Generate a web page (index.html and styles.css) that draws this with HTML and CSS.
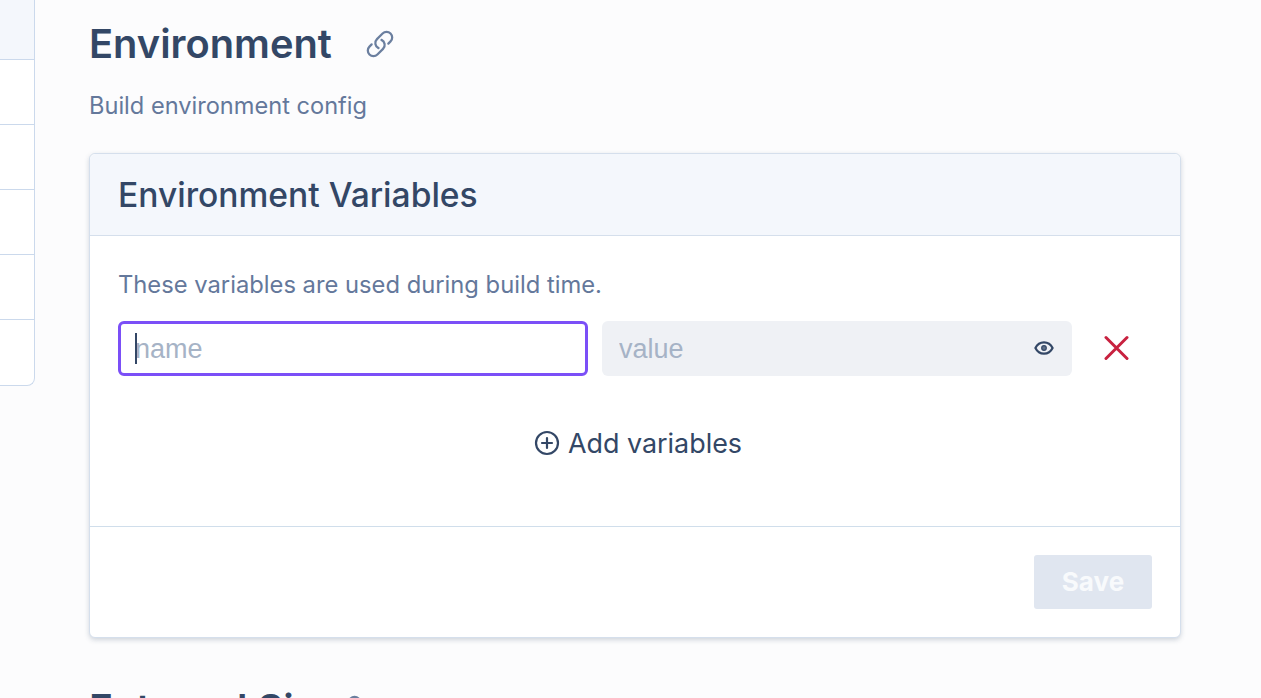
FILE: index.html
```html
<!DOCTYPE html>
<html lang="en">
<head>
<meta charset="utf-8">
<title>Environment</title>
<link rel="stylesheet" href="styles.css">
</head>
<body>
<div class="page">
  <aside class="sidenav">
    <div class="nav-row nav-row-active"></div>
    <div class="nav-row"></div>
    <div class="nav-row"></div>
    <div class="nav-row"></div>
    <div class="nav-row"></div>
    <div class="nav-row nav-row-last"></div>
  </aside>
  <main class="main">
    <div class="section-head">
      <h1 class="section-title">Environment</h1>
      <svg class="link-icon" viewBox="0 0 24 24" fill="none" stroke="currentColor" stroke-width="1.8" stroke-linecap="round" stroke-linejoin="round"><path d="M13.19 8.688a4.5 4.5 0 0 1 1.242 7.244l-4.5 4.5a4.5 4.5 0 0 1-6.364-6.364l1.757-1.757m13.35-.622 1.757-1.757a4.5 4.5 0 0 0-6.364-6.364l-4.5 4.5a4.5 4.5 0 0 0 1.242 7.244"/></svg>
    </div>
    <p class="section-sub">Build environment config</p>
    <section class="card">
      <header class="card-head">
        <h2 class="card-title">Environment Variables</h2>
      </header>
      <div class="card-body">
        <p class="hint">These variables are used during build time.</p>
        <div class="var-row">
          <div class="field field-focus">
            <input class="field-input" type="text" placeholder="name">
            <span class="caret"></span>
          </div>
          <div class="field field-muted">
            <input class="field-input" type="text" placeholder="value">
            <svg class="eye-icon" viewBox="0 0 20 20" fill="none"><path d="M1.400 10C3.200 6.400 6.300 4.300 10 4.300s6.800 2.100 8.600 5.700c-1.800 3.600-4.900 5.700-8.600 5.700S3.200 13.600 1.400 10z" stroke="currentColor" stroke-width="2.200" stroke-linejoin="round"/><circle cx="10" cy="10" r="2.300" fill="#5f7088" stroke="currentColor" stroke-width="1.200"/></svg>
          </div>
          <svg class="x-icon" viewBox="0 0 26 26" fill="none" stroke="currentColor" stroke-width="3" stroke-linecap="round"><path d="M3 2.500l21 21M24 2.500l-21 21"/></svg>
        </div>
        <div class="add-row">
          <svg class="plus-icon" viewBox="0 0 26 26" fill="none" stroke="currentColor" stroke-width="2.200" stroke-linecap="round"><circle cx="13" cy="13" r="11"/><path d="M13 8v10M8 13h10"/></svg>
          <span class="add-label">Add variables</span>
        </div>
      </div>
      <footer class="card-foot">
        <button class="save-btn" type="button" disabled>Save</button>
      </footer>
    </section>
    <div class="section-head section-head-next">
      <h1 class="section-title">External Si</h1>
      <svg class="link-icon" viewBox="0 0 24 24" fill="none" stroke="currentColor" stroke-width="1.8" stroke-linecap="round" stroke-linejoin="round"><path d="M13.19 8.688a4.5 4.5 0 0 1 1.242 7.244l-4.5 4.5a4.5 4.5 0 0 1-6.364-6.364l1.757-1.757m13.35-.622 1.757-1.757a4.5 4.5 0 0 0-6.364-6.364l-4.5 4.5a4.5 4.5 0 0 0 1.242 7.244"/></svg>
    </div>
  </main>
</div>
</body>
</html>
```
FILE: styles.css
```css
* { box-sizing: border-box; }
html, body { margin: 0; padding: 0; height: 100%; overflow: hidden; }
body { font-family: Inter, "Noto Sans", sans-serif; background: #fcfcfd; color: #334766; }
.page { display: flex; align-items: flex-start; height: 698px; overflow: hidden; }

.sidenav { flex: 0 0 35px; height: 386px; margin-right: 54px; background: #fff; border: 1px solid #cbd9ec; border-width: 0 1px 1px 0; border-bottom-right-radius: 8px; }
.nav-row { height: 65px; border-bottom: 1px solid #cbd9ec; }
.nav-row-active { height: 60px; background: #f4f7fc; }
.nav-row-last { border-bottom: 0; }

.main { flex: 0 0 1092px; padding-top: 21px; }
.section-head { display: flex; align-items: center; gap: 33px; height: 46px; }
.section-title { margin: 0; font-size: 39.8px; line-height: 46px; font-weight: 600; color: #334766; }
.link-icon { width: 30px; height: 30px; color: #6b7f9f; }
.section-sub { margin: 23px 0 0; font-size: 23.6px; line-height: 32px; color: #64789b; }

.card { margin-top: 31px; background: #fff; border: 1px solid #d5dfec; border-radius: 6px; box-shadow: 0 2px 5px rgba(51, 71, 102, .22); }
.card-head { height: 82px; display: flex; align-items: center; padding: 0 28px; background: #f4f7fc; border-bottom: 1px solid #d5dfec; border-radius: 6px 6px 0 0; }
.card-title { margin: 0; font-size: 33.6px; font-weight: 500; color: #334766; }
.card-body { height: 291px; padding: 34px 28px 0; border-bottom: 1px solid #d0deeb; }
.hint { margin: 0; font-size: 23.75px; line-height: 30px; color: #64789b; }
.var-row { display: flex; align-items: center; gap: 14px; margin-top: 21px; }
.field { position: relative; flex: 0 0 470px; height: 55px; border-radius: 6px; display: flex; align-items: center; }
.field-focus { background: #fff; border: 3px solid #7b4ff7; }
.field-muted { background: #eff1f5; padding-left: 3px; }
.field-input { width: 100%; min-width: 0; border: 0; outline: 0; background: transparent; padding: 2px 14px 0; font-family: "Liberation Sans", Arial, sans-serif; font-size: 27px; color: #334766; }
.field-input::placeholder { color: #a6b3c6; opacity: 1; }
.caret { position: absolute; left: 14px; top: 9px; width: 2px; height: 31px; background: #334766; }
.eye-icon { position: absolute; right: 18px; top: 17px; width: 20px; height: 20px; color: #334766; }
.x-icon { width: 26px; height: 26px; margin: 0 0 2px 17px; color: #c8213f; }
.add-row { display: flex; align-items: center; justify-content: center; gap: 8px; margin-top: 49px; margin-left: 6px; }
.plus-icon { width: 26px; height: 26px; color: #334766; }
.add-label { font-size: 26.9px; line-height: 36px; color: #334766; }
.card-foot { height: 110px; display: flex; justify-content: flex-end; align-items: center; padding: 0 28px; }
.save-btn { width: 118px; height: 54px; border: 0; border-radius: 3px; background: #e0e6f0; color: #f8fafc; font-family: Inter, sans-serif; font-size: 26px; font-weight: 700; padding: 0 0 2px; }
.section-head-next { margin-top: 48px; gap: 39px; }
```
